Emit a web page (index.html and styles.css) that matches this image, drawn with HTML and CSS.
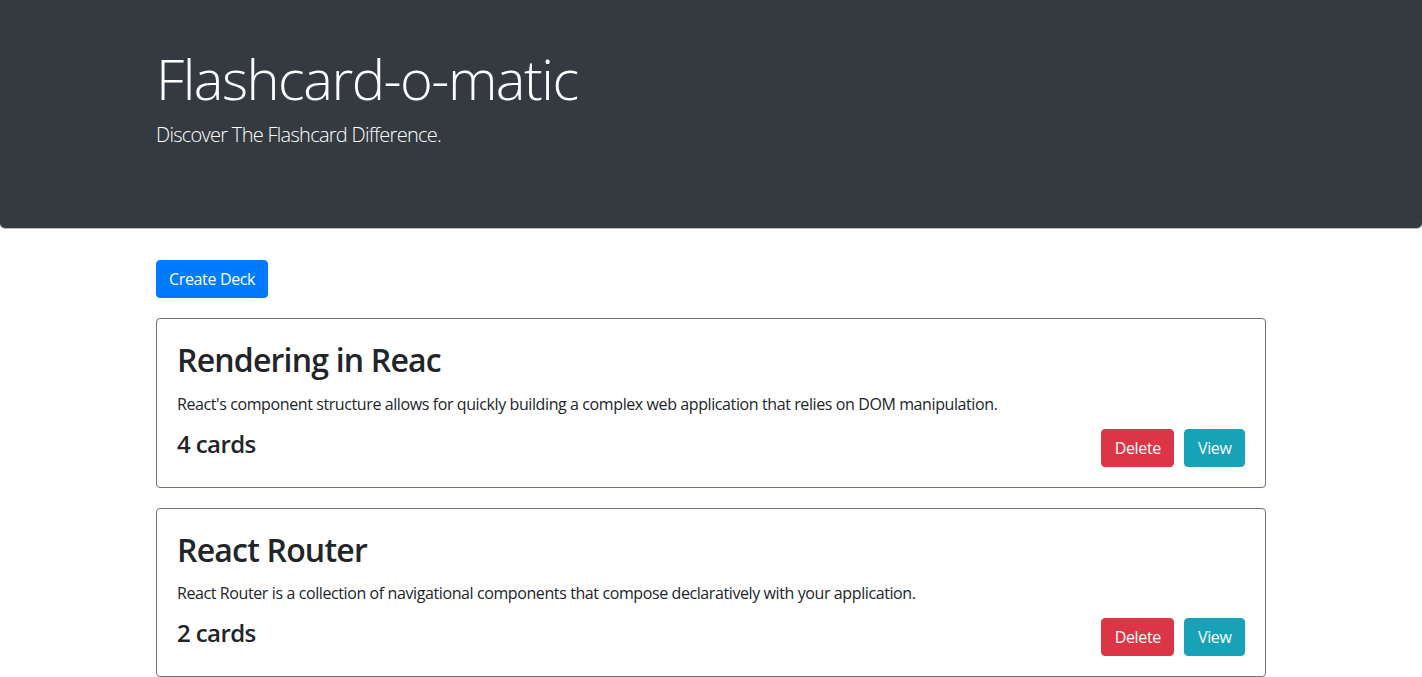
FILE: index.html
```html
<!DOCTYPE html>
<html lang="en">
<head>
<meta charset="utf-8">
<title>Flashcard-o-matic</title>
<link rel="stylesheet" href="styles.css">
</head>
<body>
<header class="jumbotron">
  <div class="container">
    <h1 class="display">Flashcard-o-matic</h1>
    <p class="lead">Discover The Flashcard Difference.</p>
  </div>
</header>
<main class="container">
  <button class="btn btn-primary">Create Deck</button>
  <div class="deck-list">
    <section class="card">
      <h2 class="card-title">Rendering in Reac</h2>
      <p class="card-text">React's component structure allows for quickly building a complex web application that relies on DOM manipulation.</p>
      <div class="card-footer">
        <h4 class="count">4 cards</h4>
        <div class="actions">
          <button class="btn btn-danger">Delete</button>
          <button class="btn btn-info">View</button>
        </div>
      </div>
    </section>
    <section class="card">
      <h2 class="card-title">React Router</h2>
      <p class="card-text">React Router is a collection of navigational components that compose declaratively with your application.</p>
      <div class="card-footer">
        <h4 class="count">2 cards</h4>
        <div class="actions">
          <button class="btn btn-danger">Delete</button>
          <button class="btn btn-info">View</button>
        </div>
      </div>
    </section>
  </div>
</main>
</body>
</html>
```
FILE: styles.css
```css
* { box-sizing: border-box; }
html, body { margin: 0; padding: 0; }
body {
  font-family: "Open Sans", "Noto Sans", sans-serif;
  font-size: 16px;
  line-height: 1.5;
  color: #212529;
  background: #fff;
  letter-spacing: -0.4px;
}
.container {
  width: 1140px;
  margin: 0 auto;
  padding: 0 15px;
}
.jumbotron {
  background: #343a40;
  color: #fff;
  padding: 45px 0 62px;
  margin-bottom: 32px;
  border-radius: 0 0 5px 5px;
  box-shadow: 0 1px 0 #b8bcc0;
}
.display {
  margin: 0 0 8px;
  font-size: 56px;
  font-weight: 300;
  line-height: 1.2;
  letter-spacing: -1.5px;
}
.lead {
  margin: 0 0 16px;
  font-size: 20px;
  font-weight: 300;
  line-height: 1.5;
  letter-spacing: -0.72px;
}
.btn {
  display: inline-block;
  font-family: inherit;
  font-size: 16px;
  line-height: 24px;
  letter-spacing: -0.35px;
  padding: 6px 12px;
  border: 1px solid transparent;
  border-radius: 4px;
  color: #fff;
  cursor: pointer;
}
.btn-primary { background: #007bff; border-color: #007bff; }
.btn-danger { background: #dc3545; border-color: #dc3545; }
.btn-info { background: #17a2b8; border-color: #17a2b8; }
.deck-list {
  display: flex;
  flex-direction: column;
  gap: 20px;
  margin-top: 20px;
}
.card {
  border: 1px solid #6c757d;
  border-radius: 4px;
  padding: 22px 20px 20px;
}
.card-title {
  margin: 0 0 12px;
  font-size: 32px;
  font-weight: 600;
  line-height: 1.2;
  letter-spacing: -0.8px;
}
.card-text {
  margin: 0 0 14px;
}
.card-footer {
  display: flex;
  justify-content: space-between;
  align-items: flex-start;
}
.count {
  margin: 0;
  font-size: 24px;
  font-weight: 600;
  line-height: 1.2;
  letter-spacing: -0.6px;
}
.actions {
  display: flex;
  gap: 10px;
  margin-top: -1px;
}
.actions .btn {
  padding-left: 12.5px;
  padding-right: 12.5px;
}
```
